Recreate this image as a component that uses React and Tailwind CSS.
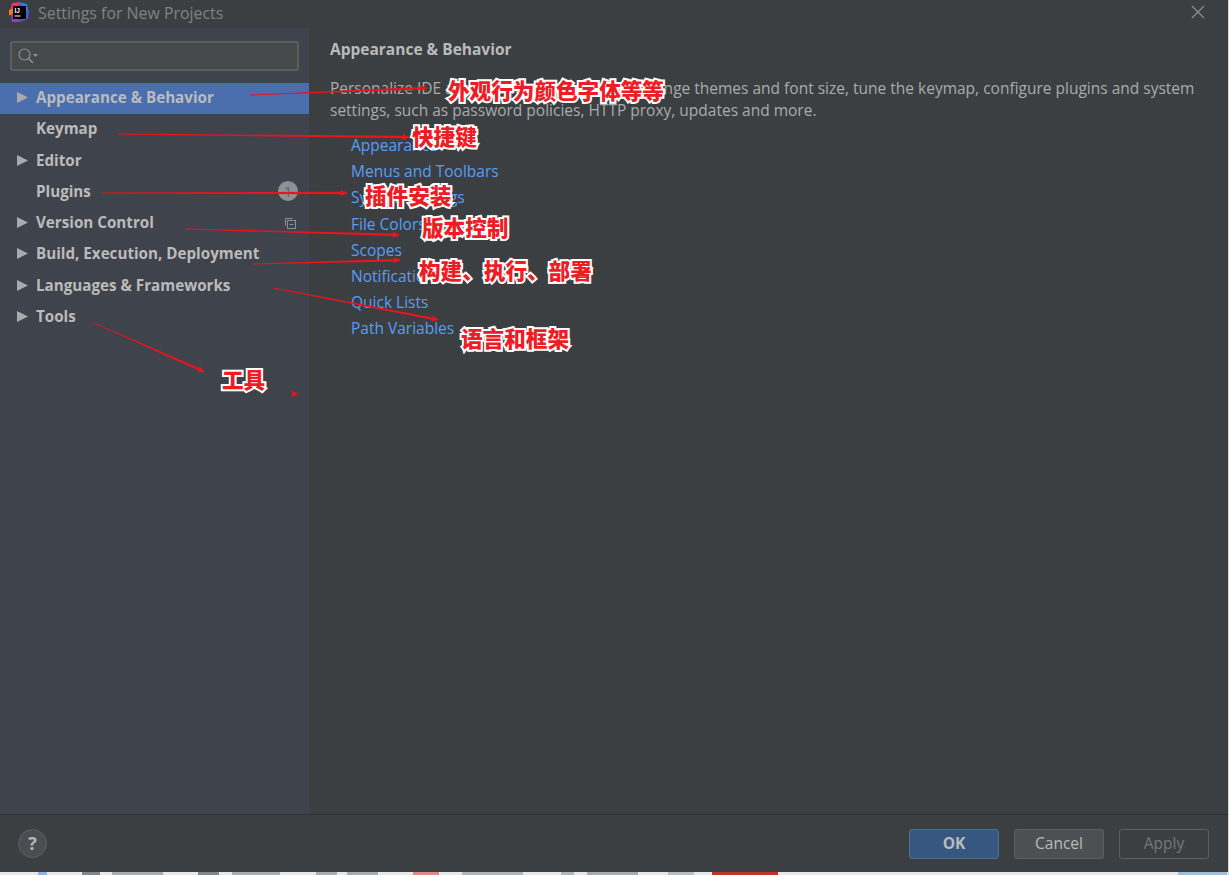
import React from "react";

const navItems = [
  { label: "Appearance & Behavior", arrow: true, selected: true },
  { label: "Keymap" },
  { label: "Editor", arrow: true },
  { label: "Plugins", badge: true },
  { label: "Version Control", arrow: true, copy: true },
  { label: "Build, Execution, Deployment", arrow: true },
  { label: "Languages & Frameworks", arrow: true },
  { label: "Tools", arrow: true },
];

const links = [
  "Appearance",
  "Menus and Toolbars",
  "System Settings",
  "File Colors",
  "Scopes",
  "Notifications",
  "Quick Lists",
  "Path Variables",
];

const notes = [
  { text: "外观行为颜色字体等等", cls: "left-[448px] top-[77px]" },
  { text: "快捷键", cls: "left-[412px] top-[123px]" },
  { text: "插件安装", cls: "left-[365px] top-[182px]" },
  { text: "版本控制", cls: "left-[422px] top-[214px]" },
  { text: "构建、执行、部署", cls: "left-[419px] top-[257px]" },
  { text: "语言和框架", cls: "left-[461px] top-[325px]" },
  { text: "工具", cls: "left-[222px] top-[366px]" },
];

// start x, start y, end x, end y
const arrows = [
  [250, 95, 428, 88],
  [118, 134, 410, 137],
  [101, 193, 348, 193],
  [186, 229, 400, 235],
  [253, 264, 401, 260],
  [274, 288, 439, 320],
  [92, 322, 205, 372],
  [293, 394, 299, 394],
];

// bits of the desktop showing under the dialog
const desktopBits = [
  "ml-[38px] w-[9px] bg-[#8fb5e2]",
  "ml-[35px] w-[18px] bg-[#85868c]",
  "ml-[12px] w-[51px] bg-[#a9abad]",
  "ml-[35px] w-[21px] bg-[#85868c]",
  "ml-[13px] w-[48px] bg-[#a9abad]",
  "ml-[36px] w-[21px] bg-[#a9abad]",
  "ml-[10px] w-[31px] bg-[#a9abad]",
  "ml-[35px] w-[26px] bg-[#dc8a8a]",
  "ml-[23px] w-[61px] bg-[#b4b5b7]",
  "ml-[38px] w-[13px] bg-[#b4b5b7]",
  "ml-[13px] w-[51px] bg-[#a9abad]",
  "ml-[30px] w-[26px] bg-[#bcbdbf]",
  "ml-[18px] w-[66px] bg-[#c0342b]",
  "ml-[400px] w-[49px] bg-[#a3bcd8]",
];

function Arrows() {
  return (
    <svg className="absolute left-0 top-0 pointer-events-none" width="1229" height="875">
      {arrows.map(([x1, y1, x2, y2], i) => {
        const a = Math.atan2(y2 - y1, x2 - x1);
        const c = Math.cos(a);
        const s = Math.sin(a);
        const bx = x2 - 7 * c;
        const by = y2 - 7 * s;
        const head = `${x2},${y2} ${bx - 3 * s},${by + 3 * c} ${bx + 3 * s},${by - 3 * c}`;
        // line gets thicker towards the head
        const body = `${x1 - 0.4 * s},${y1 + 0.4 * c} ${bx - 1.2 * s},${by + 1.2 * c} ${bx + 1.2 * s},${by - 1.2 * c} ${x1 + 0.4 * s},${y1 - 0.4 * c}`;
        return (
          <g key={i} fill="#e8141e">
            <polygon points={body} />
            <polygon points={head} />
          </g>
        );
      })}
    </svg>
  );
}

function Logo() {
  return (
    <svg width="20" height="20" viewBox="0 0 20 20">
      <polygon points="3,1 11,0 9,8 1,9" fill="#f0306f" />
      <polygon points="10,0 18,2 20,12 13,8" fill="#2f7ce0" />
      <polygon points="0,8 6,6 7,14 0,13" fill="#f97a12" />
      <polygon points="2,12 10,12 11,20 3,20" fill="#8e3fc4" />
      <polygon points="12,12 20,9 19,17 11,20" fill="#4a58d8" />
      <rect x="4" y="4" width="13" height="13" fill="#000" />
      <text x="5.5" y="10.5" fontSize="6.5" fontWeight="700" fill="#fff" fontFamily="Liberation Sans">IJ</text>
      <rect x="5.5" y="13.5" width="6" height="1" fill="#fff" />
    </svg>
  );
}

function SearchIcon() {
  return (
    <svg width="21" height="17" viewBox="0 0 21 17" fill="none">
      <circle cx="6.5" cy="6.5" r="5.5" stroke="#8d9092" strokeWidth="1.2" />
      <path d="M10.5 10.5L15 15" stroke="#8d9092" strokeWidth="1.5" />
      <polygon points="15,6 20,6 17.5,9" fill="#8d9092" />
    </svg>
  );
}

function NavRow({ item }) {
  return (
    <div
      className={`flex items-center h-[31.25px] pb-[2px] pl-[17px] pr-[11px] ${
        item.selected ? "bg-[#4b6eaf]" : ""
      }`}
    >
      <div className="w-[19px] h-[11px] flex shrink-0">
        {item.arrow && (
          <svg width="11" height="11" viewBox="0 0 11 11">
            <polygon points="0,0 11,5.5 0,11" fill="#a9aaab" />
          </svg>
        )}
      </div>
      <span className="flex-1 text-[15.2px] font-bold text-[#bbbbbb] whitespace-nowrap">{item.label}</span>
      {item.badge && (
        <span className="w-[20px] h-[20px] rounded-full bg-[#8c9196] text-[#5f6368] text-[15px] leading-[20px] text-center">
          1
        </span>
      )}
      {item.copy && (
        <svg className="mr-[2px]" width="12" height="12" viewBox="0 0 12 12" fill="none" stroke="#8c8f91">
          <path d="M8.5 1.5H1.5V8.5" />
          <rect x="3.5" y="3.5" width="8" height="8" />
          <path d="M5.5 7.5H9.5" />
        </svg>
      )}
    </div>
  );
}

export default function App() {
  return (
    <div className="relative w-[1229px] h-[875px] overflow-hidden flex flex-col bg-[#3c3f41] font-['Open_Sans','Noto_Sans_CJK_SC',sans-serif]">
      {/* Title bar */}
      <div className="h-[28px] shrink-0 flex items-start pt-[2px] pl-[9px] pr-[24px] bg-[#3c3f41]">
        <Logo />
        <span className="ml-[9px] text-[15.9px] leading-[22px] text-[#7f8386]">Settings for New Projects</span>
        <svg className="ml-auto mt-[3px]" width="14" height="14" viewBox="0 0 14 14" stroke="#8b8d8f" strokeWidth="1.2">
          <path d="M1 1L13 13M13 1L1 13" />
        </svg>
      </div>

      {/* Body */}
      <div className="flex flex-1 min-h-0">
        <aside className="w-[309px] shrink-0 bg-[#3f434c]">
          <div className="pt-[13px] px-[10px] pb-[12px]">
            <div className="h-[30px] flex items-center pl-[6px] rounded-[3px] border-2 border-[#5a5e60] bg-[#45494a]">
              <SearchIcon />
            </div>
          </div>
          {navItems.map((item) => (
            <NavRow key={item.label} item={item} />
          ))}
        </aside>

        <main className="flex-1 pl-[21px] pr-[30px] pt-[11px]">
          <h1 className="text-[15.5px] font-bold text-[#bbbbbb] leading-[20px]">Appearance &amp; Behavior</h1>
          <p className="mt-[18px] text-[15.5px] leading-[22px] text-[#a9abac]">
            Personalize IDE appearance and behavior: change themes and font size, tune the keymap, configure plugins and
            system settings, such as password policies, HTTP proxy, updates and more.
          </p>
          <ul className="mt-[11px] pl-[21px]">
            {links.map((link) => (
              <li key={link} className="h-[26.2px] text-[15.5px] leading-[26px] text-[#589df6]">
                {link}
              </li>
            ))}
          </ul>
        </main>
      </div>

      {/* Footer */}
      <div className="h-[58px] shrink-0 flex items-center pl-[18px] pr-[20px] border-t border-[#323232]">
        <div className="w-[29px] h-[29px] rounded-full bg-[#4b4e50] border border-[#5e6163] flex items-center justify-center text-[18px] font-bold text-[#b5b7b8]">
          ?
        </div>
        <button className="ml-auto w-[90px] h-[30px] rounded-[3px] bg-[#365880] border border-[#4c708c] text-[15.5px] font-bold text-[#bbbbbb]">
          OK
        </button>
        <button className="ml-[15px] w-[90px] h-[30px] rounded-[3px] bg-[#4c5052] border border-[#5e6060] text-[15.5px] text-[#bbbbbb]">
          Cancel
        </button>
        <button className="ml-[15px] w-[90px] h-[30px] rounded-[3px] border border-[#5e6060] text-[15.5px] text-[#777777]">
          Apply
        </button>
      </div>

      {/* Desktop behind the dialog */}
      <div className="h-[3px] shrink-0 flex bg-[#e8e8e8]">
        {desktopBits.map((cls, i) => (
          <div key={i} className={cls} />
        ))}
      </div>

      {/* Sliver of the window next to the dialog */}
      <div className="absolute right-0 top-0 bottom-0 w-px bg-[#d5d5d5]" />

      {/* Red annotations drawn over the screenshot */}
      <Arrows />
      {notes.map((n) => (
        <span
          key={n.text}
          className={`absolute ${n.cls} text-[21.6px] leading-[28px] font-black whitespace-nowrap text-[#ee1c25] [-webkit-text-stroke:4px_white] [paint-order:stroke_fill]`}
        >
          {n.text}
        </span>
      ))}
    </div>
  );
}
